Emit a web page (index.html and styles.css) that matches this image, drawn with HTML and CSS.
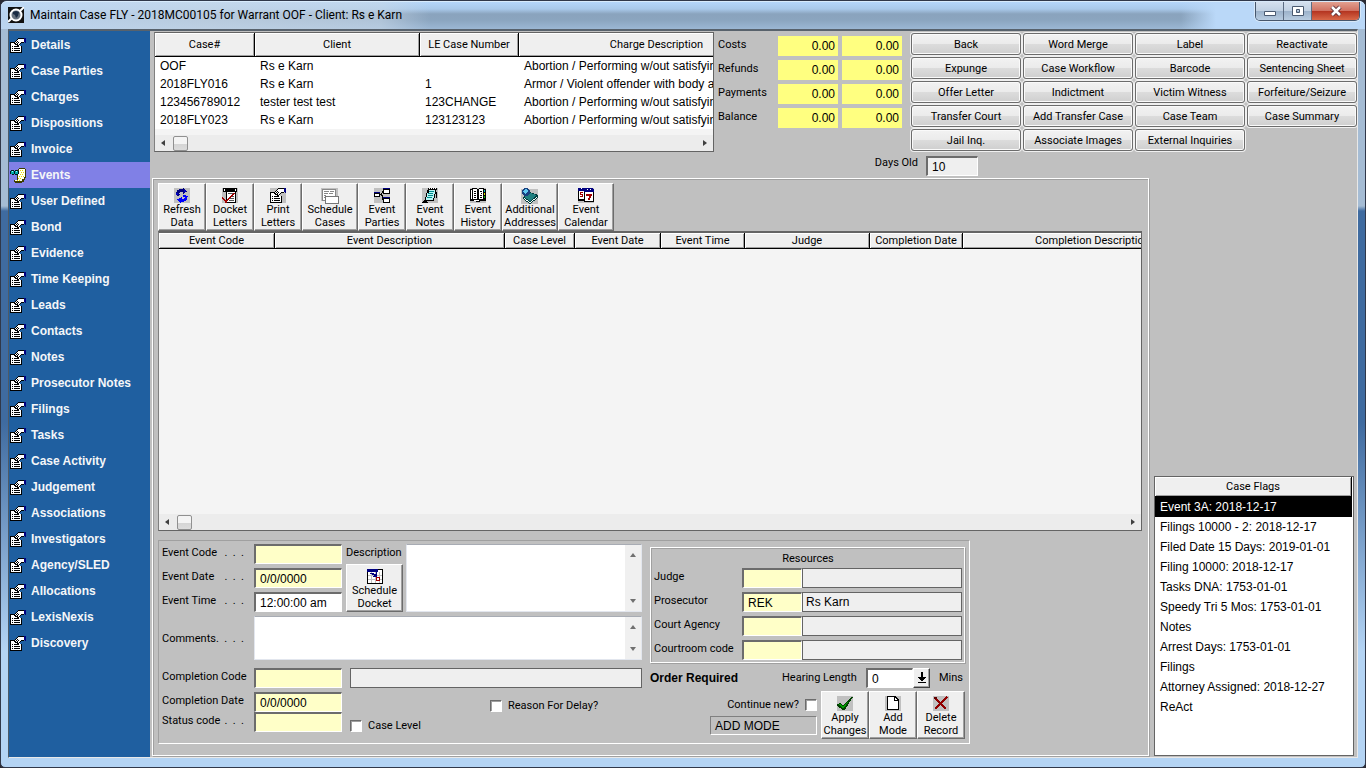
FILE: index.html
```html
<!DOCTYPE html>
<html lang="en">
<head>
<meta charset="utf-8">
<title>Maintain Case FLY - 2018MC00105 for Warrant OOF - Client: Rs e Karn</title>
<link rel="stylesheet" href="styles.css">
</head>
<body>
<svg class="defs" width="0" height="0" aria-hidden="true">
  <symbol id="i-props" viewBox="0 0 16 15">
    <path d="M0 4h6v1H1v9h10V8h1v7H0z" fill="#000"/>
    <path d="M1 5h9v3h1v6H1z" fill="#fff"/>
    <path d="M2 8h1v1H2zM4 8h5v1H4zM2 10h1v1H2zM4 10h6v1H4zM2 12h1v1H2zM4 12h6v1H4z" fill="#000"/>
    <path d="M5 3h1V2h1V1h1V0h6v5h-3v1h-1v1H9v1H7V7H5V6H4V4h1z" fill="#000"/>
    <path d="M6 3h1V2h1V1h6v3h-3v1h-1v1H9v1H8V6H6V5H5V4h1z" fill="#fff"/>
    <path d="M6 4h1v1H6zM8 4h1v1H8zM7 3h1v1H7zM7 5h1v1H7z" fill="#000"/>
    <path d="M14 0h2v5h-1V4h-1z" fill="#000080"/>
  </symbol>
  <symbol id="i-glasses" viewBox="0 0 16 15">
    <path d="M8 1h1V0h6v1h1v9h-1v2h-1v2h-2v1H5v-1H4v-2h3V6h1z" fill="#3c3c00"/>
    <path d="M9 1h6v8h-1v2h-2v2H5v-1h3V6h1z" fill="#fffff0"/>
    <path d="M10 2h1v1h-1zM12 2h1v1h-1zM11 4h1v1h-1zM13 4h1v1h-1zM10 6h1v1h-1zM12 6h1v1h-1zM9 8h1v1H9zM11 8h1v1h-1zM13 8h1v1h-1zM8 10h1v1H8zM10 10h1v1h-1zM7 12h1v1H7zM9 12h1v1H9z" fill="#e8d800"/>
    <path d="M0 3h1V2h3v1h1V2h3v1h1v3H8v1H5V6H4v1H2V6H0z" fill="#001818"/>
    <path d="M1 3h3v3H1zM5 3h3v3H5z" fill="#00a8a8"/>
    <path d="M2 3h1v1H2zM6 3h1v1H6z" fill="#a0ffff"/>
  </symbol>
  <symbol id="i-refresh" viewBox="0 0 16 15">
    <path fill="#c0c0c0" d="M0 0h16v15H0z"/>
    <path d="M2 6V4h1V2h2V1h4V0h1v1h1v1h1v1h1v1h-2v1h-1v1H9V4H6v1H5v1h1v1H5v1H3V7H2z" fill="#000080"/>
    <path d="M9 7h3v1h2v1h-1v3h-1v1h-2v1H7v1H6v-1H5v-1H4v-1H3v-1h2v-1h2V9h1v2h2v-1h1V9H9z" fill="#0000ff"/>
    <path d="M2 5h2v2H2zM10 2h2v2h-2z" fill="#0000c0"/>
  </symbol>
  <symbol id="i-docket" viewBox="0 0 16 15">
    <path d="M1 0h14v4h-1v11H4V4H1z" fill="#000"/>
    <path d="M2 1h1v2H2zM13 1h1v2h-1zM5 4h8v10H5z" fill="#fff"/>
    <path d="M6 5h6v1H6zM9 8h3v1H9zM8 10h4v1H8zM7 12h5v1H7z" fill="#505050"/>
    <path d="M0 9l4 5 8-9" fill="none" stroke="#a00000" stroke-width="1.500"/>
  </symbol>
  <symbol id="i-pages" viewBox="0 0 18 16">
    <path d="M0 0h17v13H0z" fill="#c0c0c0"/>
    <path d="M1 1h13v11H1z" fill="#fff" stroke="#888"/>
    <path d="M3 3h5v1H3zM9 3h4v1H9zM3 5h4v1H3zM8 5h4v1H8zM3 7h2v1H3zM3 9h1v1H3z" fill="#888"/>
    <path d="M4.500 8.500h13v7h-13z" fill="#fff" stroke="#777"/>
  </symbol>
  <symbol id="i-tree" viewBox="0 0 16 15">
    <path d="M0 4h6v5H0zM9 0h7v6H9zM9 9h7v6H9z" fill="#000"/>
    <path d="M1 6h4v2H1zM10 2h5v3h-5zM10 11h5v3h-5z" fill="#fff"/>
    <path d="M0 4h6v1H0zM9 0h7v1H9zM9 9h7v1H9z" fill="#000080"/>
    <path d="M6 6h1V5h1V3h1v2H8v2h1v5H8V8H7V7H6z" fill="#000"/>
  </symbol>
  <symbol id="i-notes" viewBox="0 0 16 15">
    <path d="M6 0h9v2h-1v4h-1v4h-1v3H3v-4h1V5h1V2h1z" fill="#000"/>
    <path d="M7 2h6v4h-1v4h-1v2H4V9h1V5h2z" fill="#b8f4f4"/>
    <path d="M7 3h5v1H7zM6 5h5v1H6zM6 7h5v1H6zM5 9h5v1H5z" fill="#008c8c"/>
    <path d="M7 0h1v1H7zM9 0h1v1H9zM11 0h1v1h-1zM13 0h1v1h-1z" fill="#fff"/>
    <path d="M0 15v-1h1v-1h1v-1h2v1h1v1h1v1zM14 4h1v6h-1z" fill="#000"/>
  </symbol>
  <symbol id="i-book" viewBox="0 0 16 15">
    <path d="M0 1h2V0h5v1h2V0h5v1h2v12h-6v1H6v-1H0z" fill="#000"/>
    <path d="M1 2h1v9H1zM3 1h4v10H3zM9 1h4v10H9zM1 12h8v1H6z" fill="#fff"/>
    <path d="M4 3h2v1H4zM4 5h2v1H4zM4 7h2v1H4zM10 3h2v1h-2zM11 5h1v1h-1zM10 7h2v1h-2zM4 9h2v1H4zM10 9h2v1h-2z" fill="#000"/>
    <path d="M14 2h1v2h-1z" fill="#00c0c0"/><path d="M14 5h1v2h-1z" fill="#e0e000"/><path d="M14 8h1v2h-1z" fill="#00c000"/>
  </symbol>
  <symbol id="i-address" viewBox="0 0 18 16">
    <path d="M0 1h17v15H0z" fill="#c0c0c0"/>
    <path d="M2 9l7-5 8 3v3l-8 6-7-5z" fill="#003c3c"/>
    <path d="M3 9l6-4 7 2-7 6z" fill="#208080"/>
    <path d="M9 14l7-5v1l-7 5-6-4v-1z" fill="#fff"/>
    <circle cx="5" cy="4" r="4" fill="#184080"/>
    <path d="M2 3l3-2 2 2-2 3-2-1z" fill="#60c8f0"/>
  </symbol>
  <symbol id="i-calendar" viewBox="0 0 16 15">
    <path d="M0 0h10v13H0z" fill="#000"/><path d="M1 3h8v8H1z" fill="#fff"/><path d="M0 0h15v3H0z" fill="#000080"/>
    <path d="M2 4h3v1H3v1h2v3H2V8h2V7H2z" fill="#a00000"/>
    <path d="M6 2h10v12H6z" fill="#000"/><path d="M7 4h8v9H7z" fill="#fff"/><path d="M6 1h10v3H6z" fill="#000080"/>
    <path d="M8 6h6v2h-1v2h-1v2h-2v-2h1V8H8z" fill="#a00000"/>
    <path d="M3 0h1v1H3zM9 1h1v1H9zM12 1h1v1h-1z" fill="#fff"/>
  </symbol>
  <symbol id="i-grid" viewBox="0 0 16 15">
    <path d="M0 0h16v15H0z" fill="#000"/><path d="M1 3h14v11H1z" fill="#fff"/><path d="M11 1h4v2h-4z" fill="#fff"/>
    <path d="M4 3h1v11H4zM8 3h1v11H8zM12 3h1v11h-1zM1 6h14v1H1zM1 10h14v1H1z" fill="#c0c0c0"/>
    <path d="M0 0h11v3H0zM3 4h4v1h2V3h1v5H6V7h1V6H5V5H3z" fill="#000080"/>
    <path d="M9.500 8.500h3v3h-3z" fill="#fff" stroke="#a00000"/>
  </symbol>
  <symbol id="i-check" viewBox="0 0 16 15">
    <path d="M0 0h16v15H0z" fill="#c0c0c0"/>
    <path d="M0 8l3-1 3 3 8-9h2l-7 11-2 2H6L0 10z" fill="#004000"/>
    <path d="M1 8h2l3 3 8-9-8 11z" fill="#00a000"/>
  </symbol>
  <symbol id="i-page" viewBox="0 0 16 15">
    <path d="M0 0h16v15H0z" fill="#c0c0c0"/>
    <path d="M2 0h8l4 4v10H2z" fill="#000"/><path d="M3 1h6v4h4v8H3z" fill="#fff"/>
    <path d="M10 2l2 2h-2z" fill="#fff"/>
  </symbol>
  <symbol id="i-delete" viewBox="0 0 16 15">
    <path d="M0 0h16v15H0z" fill="#c0c0c0"/>
    <path d="M2 2l11 11M14 1L2 13" stroke="#900000" stroke-width="2" fill="none"/>
    <path d="M1 1h3v2H1z" fill="#600000"/>
  </symbol>
</svg>
<div class="window">
  <header class="titlebar">
    <svg class="app-logo" viewBox="0 0 16 16" width="16" height="16" aria-hidden="true">
      <path d="M0 0h16v16H0z" fill="#101010"/>
      <circle cx="8" cy="8" r="5.500" fill="#66717e" stroke="#fff" stroke-width="2"/>
      <path d="M5 5l3-1 3 1-1 4-2 2-1-3-2-1z" fill="#1a2c44"/>
      <path d="M0 15l4-4M12 4l4-4" stroke="#fff" stroke-width="2"/>
    </svg>
    <h1 class="title">Maintain Case FLY - 2018MC00105 for Warrant OOF - Client: Rs e Karn</h1>
    <div class="winctl">
      <button type="button" class="wbtn min" aria-label="Minimize"><svg viewBox="0 0 14 12" width="14" height="12"><path d="M1.500 6.500h11v4h-11z" fill="#fff" stroke="#4a5a70"/></svg></button>
      <button type="button" class="wbtn max" aria-label="Maximize"><svg viewBox="0 0 14 12" width="14" height="12"><path d="M1.500 1.500h11v9h-11zM5.500 4.500v3h3v-3z" fill="#fff" stroke="#4a5a70" fill-rule="evenodd"/></svg></button>
      <button type="button" class="wbtn close" aria-label="Close"><svg viewBox="0 0 14 12" width="14" height="12"><path d="M3 2l8 8M11 2l-8 8" stroke="#5a3038" stroke-width="4.500"/><path d="M3 2l8 8M11 2l-8 8" stroke="#fff" stroke-width="2.500"/></svg></button>
    </div>
  </header>
  <div class="client">
    <nav class="sidebar">
      <a href="#"><svg><use href="#i-props"/></svg>Details</a>
      <a href="#"><svg><use href="#i-props"/></svg>Case Parties</a>
      <a href="#"><svg><use href="#i-props"/></svg>Charges</a>
      <a href="#"><svg><use href="#i-props"/></svg>Dispositions</a>
      <a href="#"><svg><use href="#i-props"/></svg>Invoice</a>
      <a href="#" class="active" aria-current="page"><svg><use href="#i-glasses"/></svg>Events</a>
      <a href="#"><svg><use href="#i-props"/></svg>User Defined</a>
      <a href="#"><svg><use href="#i-props"/></svg>Bond</a>
      <a href="#"><svg><use href="#i-props"/></svg>Evidence</a>
      <a href="#"><svg><use href="#i-props"/></svg>Time Keeping</a>
      <a href="#"><svg><use href="#i-props"/></svg>Leads</a>
      <a href="#"><svg><use href="#i-props"/></svg>Contacts</a>
      <a href="#"><svg><use href="#i-props"/></svg>Notes</a>
      <a href="#"><svg><use href="#i-props"/></svg>Prosecutor Notes</a>
      <a href="#"><svg><use href="#i-props"/></svg>Filings</a>
      <a href="#"><svg><use href="#i-props"/></svg>Tasks</a>
      <a href="#"><svg><use href="#i-props"/></svg>Case Activity</a>
      <a href="#"><svg><use href="#i-props"/></svg>Judgement</a>
      <a href="#"><svg><use href="#i-props"/></svg>Associations</a>
      <a href="#"><svg><use href="#i-props"/></svg>Investigators</a>
      <a href="#"><svg><use href="#i-props"/></svg>Agency/SLED</a>
      <a href="#"><svg><use href="#i-props"/></svg>Allocations</a>
      <a href="#"><svg><use href="#i-props"/></svg>LexisNexis</a>
      <a href="#"><svg><use href="#i-props"/></svg>Discovery</a>
    </nav>
    <main class="main">
      <section class="top">
        <div class="grid cases">
          <div class="grid-view">
            <table>
              <colgroup><col class="c100"><col class="c165"><col class="c99"><col class="c276"></colgroup>
              <thead><tr><th>Case#</th><th>Client</th><th>LE Case Number</th><th>Charge Description</th></tr></thead>
              <tbody>
                <tr><td>OOF</td><td>Rs e Karn</td><td></td><td>Abortion / Performing w/out satisfying</td></tr>
                <tr><td>2018FLY016</td><td>Rs e Karn</td><td>1</td><td>Armor / Violent offender with body armor</td></tr>
                <tr><td>123456789012</td><td>tester test test</td><td>123CHANGE</td><td>Abortion / Performing w/out satisfying</td></tr>
                <tr><td>2018FLY023</td><td>Rs e Karn</td><td>123123123</td><td>Abortion / Performing w/out satisfying</td></tr>
              </tbody>
            </table>
          </div>
          <div class="hscroll"><i class="arr left"></i><i class="thumb"></i><i class="arr right"></i></div>
        </div>
        <div class="summary">
          <div class="totals">
            <span>Costs</span><output>0.00</output><output>0.00</output>
            <span>Refunds</span><output>0.00</output><output>0.00</output>
            <span>Payments</span><output>0.00</output><output>0.00</output>
            <span>Balance</span><output>0.00</output><output>0.00</output>
          </div>
          <div class="days"><label for="days">Days Old</label><input id="days" class="sunk gray" value="10" readonly></div>
        </div>
        <div class="actions">
          <button type="button">Back</button><button type="button">Word Merge</button><button type="button">Label</button><button type="button">Reactivate</button>
          <button type="button">Expunge</button><button type="button">Case Workflow</button><button type="button">Barcode</button><button type="button">Sentencing Sheet</button>
          <button type="button">Offer Letter</button><button type="button">Indictment</button><button type="button">Victim Witness</button><button type="button">Forfeiture/Seizure</button>
          <button type="button">Transfer Court</button><button type="button">Add Transfer Case</button><button type="button">Case Team</button><button type="button">Case Summary</button>
          <button type="button">Jail Inq.</button><button type="button">Associate Images</button><button type="button">External Inquiries</button>
        </div>
      </section>
      <div class="lower">
        <section class="panel">
          <div class="toolbar">
            <button type="button" class="tool"><svg><use href="#i-refresh"/></svg>Refresh<br>Data</button>
            <button type="button" class="tool"><svg><use href="#i-docket"/></svg>Docket<br>Letters</button>
            <button type="button" class="tool"><svg><use href="#i-props"/></svg>Print<br>Letters</button>
            <button type="button" class="tool wide"><svg class="big"><use href="#i-pages"/></svg>Schedule<br>Cases</button>
            <button type="button" class="tool"><svg><use href="#i-tree"/></svg>Event<br>Parties</button>
            <button type="button" class="tool"><svg><use href="#i-notes"/></svg>Event<br>Notes</button>
            <button type="button" class="tool"><svg><use href="#i-book"/></svg>Event<br>History</button>
            <button type="button" class="tool wide"><svg class="big"><use href="#i-address"/></svg>Additional<br>Addresses</button>
            <button type="button" class="tool wide"><svg><use href="#i-calendar"/></svg>Event<br>Calendar</button>
          </div>
          <div class="grid events">
            <div class="grid-view">
              <table>
                <colgroup><col class="c116"><col class="c230"><col class="c70"><col class="c86"><col class="c84"><col class="c125"><col class="c93"><col class="c260"></colgroup>
                <thead><tr><th>Event Code</th><th>Event Description</th><th>Case Level</th><th>Event Date</th><th>Event Time</th><th>Judge</th><th>Completion Date</th><th>Completion Description</th></tr></thead>
              </table>
            </div>
            <div class="hscroll"><i class="arr left"></i><i class="thumb"></i><i class="arr right"></i></div>
          </div>
          <form class="form">
            <div class="col-a">
              <div class="fields">
                <label for="ecode" class="dots"><span>Event Code</span><span>.&nbsp; .&nbsp; .</span></label><input id="ecode" class="sunk yellow">
                <label for="desc" class="lab">Description</label>
                <div class="area desc"><textarea id="desc"></textarea><div class="vscroll"><i class="arr up"></i><i class="arr down"></i></div></div>
                <label for="edate" class="dots"><span>Event Date</span><span>.&nbsp; .&nbsp; .</span></label><input id="edate" class="sunk yellow" value="0/0/0000">
                <button type="button" class="tool sched"><svg><use href="#i-grid"/></svg>Schedule<br>Docket</button>
                <label for="etime" class="dots"><span>Event Time</span><span>.&nbsp; .&nbsp; .</span></label><input id="etime" class="sunk" value="12:00:00 am">
              </div>
              <div class="comments">
                <label for="comm" class="dots"><span>Comments</span><span>.&nbsp; .&nbsp; .&nbsp; .</span></label>
                <div class="area"><textarea id="comm"></textarea><div class="vscroll"><i class="arr up"></i><i class="arr down"></i></div></div>
              </div>
              <div class="completion">
                <div class="codes">
                  <label for="ccode">Completion Code</label><input id="ccode" class="sunk yellow">
                  <label for="cdate">Completion Date</label><input id="cdate" class="sunk yellow" value="0/0/0000">
                  <label for="scode" class="dots"><span>Status code</span><span>.&nbsp; .&nbsp; .</span></label><input id="scode" class="sunk yellow">
                </div>
                <div class="extra">
                  <input class="flat" aria-label="Completion description" readonly>
                  <label class="tick reason"><input type="checkbox">Reason For Delay?</label>
                  <label class="tick"><input type="checkbox">Case Level</label>
                </div>
              </div>
            </div>
            <div class="col-b">
              <fieldset class="resources">
                <div class="res-title">Resources</div>
                <label for="r1">Judge</label><input id="r1" class="sunk yellow"><input class="flat" aria-label="Judge name" readonly>
                <label for="r2">Prosecutor</label><input id="r2" class="sunk yellow" value="REK"><input class="flat" aria-label="Prosecutor name" value="Rs Karn" readonly>
                <label for="r3">Court Agency</label><input id="r3" class="sunk yellow"><input class="flat" aria-label="Court agency name" readonly>
                <label for="r4">Courtroom code</label><input id="r4" class="sunk yellow"><input class="flat" aria-label="Courtroom name" readonly>
              </fieldset>
              <div class="hearing">
                <strong>Order Required</strong>
                <label for="hl">Hearing Length</label>
                <input id="hl" class="sunk" value="0">
                <button type="button" class="drop" aria-label="Choose length"><svg viewBox="0 0 10 12" width="10" height="12"><path d="M4 0h2v5h3v1H8v1H7v1H6v1H4V8H3V7H2V6H1V5h3zM1 10h8v1H1z" fill="#000"/></svg></button>
                <span>Mins</span>
              </div>
              <div class="commit">
                <div class="mode">
                  <label class="tick">Continue new?<input type="checkbox"></label>
                  <output class="mode-box">ADD MODE</output>
                </div>
                <button type="button" class="tool"><svg><use href="#i-check"/></svg>Apply<br>Changes</button>
                <button type="button" class="tool"><svg><use href="#i-page"/></svg>Add<br>Mode</button>
                <button type="button" class="tool"><svg><use href="#i-delete"/></svg>Delete<br>Record</button>
              </div>
            </div>
          </form>
        </section>
        <aside class="flags">
          <table>
            <thead><tr><th>Case Flags</th></tr></thead>
            <tbody>
              <tr class="sel"><td>Event 3A: 2018-12-17</td></tr>
              <tr><td>Filings 10000 - 2: 2018-12-17</td></tr>
              <tr><td>Filed Date 15 Days: 2019-01-01</td></tr>
              <tr><td>Filing 10000: 2018-12-17</td></tr>
              <tr><td>Tasks DNA: 1753-01-01</td></tr>
              <tr><td>Speedy Tri 5 Mos: 1753-01-01</td></tr>
              <tr><td>Notes</td></tr>
              <tr><td>Arrest Days: 1753-01-01</td></tr>
              <tr><td>Filings</td></tr>
              <tr><td>Attorney Assigned: 2018-12-27</td></tr>
              <tr><td>ReAct</td></tr>
            </tbody>
          </table>
        </aside>
      </div>
    </main>
  </div>
</div>
</body>
</html>
```
FILE: styles.css
```css
* { box-sizing: border-box; }
body { margin: 0; background: #2a2a33; }
body, button, label { font: 11px/14px Roboto, "Liberation Sans", sans-serif; color: #000; }
input, textarea, td, output { font: 12px/16px "Liberation Sans", Arial, sans-serif; color: #000; }
.defs { display: block; position: absolute; }
svg { flex: none; }
svg use { shape-rendering: crispEdges; }

/* window frame */
.window {
  display: flex; flex-direction: column; min-height: 100vh;
  padding: 0 7px 9px; border: 1px solid #30384a; border-radius: 7px 7px 5px 5px;
  background: linear-gradient(#a5bcd4 0, #a5bcd4 205px, #3f6ba0 210px, #3f6ba0 55%, #b4d4f4 85%);
}
.titlebar {
  display: flex; align-items: flex-start; height: 28px; margin: 0 -7px; padding-left: 7px;
  border-top: 1px solid #d8ebfc; border-radius: 6px 6px 0 0;
  background:
    linear-gradient(90deg, rgba(190,216,244,.9) 0, rgba(200,216,232,.75) 200px, rgba(200,216,232,.6) 380px, transparent 430px, transparent 1180px, #bad8f8 1215px),
    linear-gradient(#b4d6fa 0, #a9c9ea 7px, #8aa3bd 12px, #8ba5bf 18px, #9db9d6 28px);
}
.app-logo { margin-top: 5px; }
.title { flex: 1; margin: 4px 0 0 6px; font: 12px/18px Roboto, sans-serif; }
.winctl { display: flex; margin-right: 5px; border: 1px solid #46566c; border-top: 0; border-radius: 0 0 5px 5px; overflow: hidden; box-shadow: 0 0 0 1px #d8e8f8; }
.wbtn { display: flex; align-items: center; justify-content: center; width: 28px; height: 18px; padding: 0; border: 0; border-right: 1px solid #5c6c82; background: linear-gradient(#d4e0ee 0, #c0d0e2 50%, #9cb2ca 51%, #b8cce0); }
.wbtn.close { width: 47px; border: 0; background: linear-gradient(#e2a090 0, #d07060 50%, #b43420 51%, #d86848); }

.client { flex: 1; display: flex; border: 1px solid #4c5a68; border-top: 2px solid #58626c; background: #c0c0c0; min-width: 0; }
.client { border-right-color: #e8e8e8; border-bottom-color: #e8e8e8; }

.sidebar { flex: none; width: 141px; padding-top: 1px; background: #1f5fa0; }
.sidebar a { display: flex; align-items: center; gap: 5px; height: 26px; padding-left: 1px; color: #f4f6f8; font: bold 12px/16px "Liberation Sans", Arial, sans-serif; text-decoration: none; }
.sidebar svg { width: 16px; height: 15px; }
.sidebar a.active { background: #8080e6; }

.main { flex: 1; min-width: 0; display: flex; flex-direction: column; }

/* grids */
.grid { display: flex; flex-direction: column; border: 1px solid #646464; border-left-color: #808080; min-width: 0; background: #f4f4f4; }
.grid-view { flex: 1; overflow: hidden; }
table { border-collapse: separate; border-spacing: 0; table-layout: fixed; }
th { padding: 1px 0 0; font: 11px/14px Roboto, sans-serif; text-align: center; background: #efefef; border-right: 1px solid #000; border-bottom: 1px solid #000; box-shadow: inset 1px 1px #fff, inset -1px -1px #a0a0a0; }
td { height: 18px; padding: 0 5px; white-space: nowrap; overflow: hidden; background: #fff; }
.cases table { width: 640px; }
.cases th { height: 24px; }
.events table { width: 1064px; }
.events th { height: 16px; }
.c100 { width: 100px; } .c165 { width: 165px; } .c99 { width: 99px; } .c276 { width: 276px; }
.c116 { width: 116px; } .c230 { width: 230px; } .c70 { width: 70px; } .c86 { width: 86px; }
.c84 { width: 84px; } .c125 { width: 125px; } .c93 { width: 93px; } .c260 { width: 260px; }
.hscroll { flex: none; display: flex; align-items: center; height: 16px; padding: 0 6px; background: #ececec; }
.thumb { width: 15px; height: 15px; margin-left: 8px; border: 1px solid #909090; border-radius: 2px; background: linear-gradient(#f4f4f4 50%, #d4d4d4 51%, #dcdcdc); }
.arr { width: 0; height: 0; border: 3px solid transparent; }
.arr.left { border-left: 0; border-right: 4px solid #404040; }
.arr.right { margin-left: auto; border-right: 0; border-left: 4px solid #404040; }
.arr.up { border-top: 0; border-bottom: 4px solid #707070; }
.arr.down { border-bottom: 0; border-top: 4px solid #707070; }

/* top strip */
.top { display: flex; height: 147px; padding-left: 4px; }
.cases { flex: 1; height: 120px; margin-top: 1px; }
.summary { flex: none; width: 196px; padding-left: 4px; }
.totals { display: grid; grid-template-columns: 56px 60px 60px; grid-auto-rows: 20px; gap: 4px; padding-top: 5px; }
.totals span { line-height: 18px; }
.totals output { padding: 2px 3px 0 0; text-align: right; background: #ffff80; }
.days { display: flex; justify-content: flex-end; gap: 8px; margin: 28px -68px 0 0; }
.days input { width: 52px; height: 20px; }
.actions { flex: none; align-self: flex-start; display: grid; grid-template-columns: repeat(4, 110px); grid-auto-rows: 22px; gap: 2px; margin-top: 2px; padding: 0 0 1px 1px; }
.actions button { padding: 1px 0 0; border: 1px solid #6c6c6c; border-radius: 3px; box-shadow: 0 0 0 1px #f0f0f0, inset 0 0 0 1px #fafafa; background: linear-gradient(#f2f2f2 0, #ebebeb 50%, #dcdcdc 51%, #cfcfcf); white-space: nowrap; }

/* lower area */
.lower { flex: 1; display: flex; gap: 5px; padding: 0 3px 1px 2px; }
.panel { flex: 1; min-width: 0; display: flex; flex-direction: column; padding: 4px 6px 11px 5px; border: 1px solid #fff; box-shadow: inset 1px 1px #a0a0a0, 1px 1px #a0a0a0; }
.toolbar { display: flex; }
.tool { display: flex; flex-direction: column; align-items: center; width: 48px; height: 48px; padding: 4px 0 0; border: 1px solid #6c6c6c; border-top-color: #fff; border-left-color: #fff; background: #efefef; box-shadow: inset -1px -1px #a0a0a0; font-size: 11px; line-height: 13px; text-align: center; white-space: nowrap; }
.tool.wide { width: 56px; }
.tool svg { width: 16px; height: 15px; background: #c0c0c0; }
.tool svg.big { width: 18px; height: 16px; margin-bottom: -1px; background: none; }
.events { flex: 1; min-height: 299px; border-top-width: 2px; }

.form { display: flex; align-items: flex-start; width: 812px; height: 204px; margin-top: 9px; padding: 3px 4px; border: 1px solid #fff; border-top-color: #a0a0a0; border-left-color: #a0a0a0; }
.col-a { flex: none; width: 480px; margin-right: 7px; }
.fields { display: grid; grid-template-columns: 92px 92px 60px 236px; grid-auto-rows: 24px; margin-left: -1px; }
.fields .desc { grid-column: 4; grid-row: 1 / 4; height: 68px; }
.fields .lab { grid-column: 3; padding-top: 2px; }
.fields .sched { grid-column: 3; grid-row: 2 / 4; width: 57px; margin-top: -4px; }
.fields label:not(.lab) { grid-column: 1; padding-top: 2px; }
.dots { display: flex; justify-content: space-between; padding-right: 10px; }
.sunk { width: 88px; height: 20px; padding: 1px 0 0 4px; border: 1px solid #fff; border-top: 2px solid #6c6c6c; border-left: 2px solid #6c6c6c; border-radius: 0; background: #fff; outline: 0; }
.yellow { background: #ffffc8; }
.gray { background: #efefef; }
.flat { height: 20px; padding: 0 3px; border: 1px solid #646464; border-radius: 0; background: #efefef; outline: 0; }
.area { display: flex; border: 1px solid #e2e6ee; border-top-color: #a8acb4; background: #fff; }
.area textarea { flex: 1; min-width: 0; border: 0; resize: none; outline: 0; background: #fff; }
.vscroll { display: flex; flex-direction: column; justify-content: space-between; align-items: center; width: 16px; padding: 8px 0; background: #f0f0f0; }
.comments { display: flex; margin-left: -1px; height: 44px; }
.comments label { width: 92px; padding-top: 16px; }
.comments .area { flex: 1; margin-right: 1px; }
.completion { display: flex; margin: 8px 0 0 -1px; }
.codes { display: grid; grid-template-columns: 92px 88px; grid-template-rows: 24px 20px 20px; align-items: start; }
.codes label { padding-top: 2px; }
.extra { flex: 1; display: flex; flex-direction: column; align-items: flex-start; padding: 0 1px 0 8px; }
.extra .flat { width: 100%; }
.tick { display: flex; align-items: center; gap: 6px; height: 14px; }
.tick input { appearance: none; width: 12px; height: 12px; margin: 0; border: 1px solid #fff; border-top-color: #6c6c6c; border-left-color: #6c6c6c; background: #fff; box-shadow: inset 1px 1px #a0a0a0; }
.extra .tick { margin-top: 6px; }
.extra .reason { margin: 11px 0 0 140px; }

.col-b { flex: none; width: 315px; }
.resources { display: grid; grid-template-columns: 88px 60px 160px; grid-template-rows: 14px; grid-auto-rows: 20px; row-gap: 4px; min-width: 0; margin: 3px 0 0; padding: 2px 3px; border: 1px solid #fff; box-shadow: inset 1px 1px #a0a0a0, 1px 1px #a0a0a0; }
.resources .res-title { grid-column: 1 / 4; text-align: center; line-height: 18px; }
.resources label { padding-top: 2px; }
.resources .sunk { width: 60px; }
.resources .flat { width: 160px; }
.hearing { display: flex; align-items: center; height: 20px; margin-top: 5px; }
.hearing strong { width: 132px; font: bold 12px/16px "Liberation Sans", Arial, sans-serif; }
.hearing label { width: 84px; }
.hearing .sunk { width: 47px; }
.drop { display: flex; align-items: center; justify-content: center; width: 17px; height: 20px; padding: 0; border: 1px solid #404040; border-top-color: #fff; border-left-color: #fff; background: #efefef; box-shadow: inset -1px -1px #a0a0a0; }
.hearing span { margin-left: 9px; }
.commit { display: flex; margin-top: 3px; }
.mode { width: 171px; padding: 7px 4px 0 60px; }
.mode .tick { justify-content: flex-end; }
.mode-box { display: block; height: 19px; margin-top: 4px; padding: 1px 4px; border: 1px solid #808080; border-bottom-color: #fff; border-right-color: #fff; }

.flags { flex: none; width: 200px; height: 280px; align-self: flex-end; border: 1px solid #646464; background: #fff; }
.flags table { width: 197px; }
.flags th { height: 20px; }
.flags td { height: 20px; }
.flags .sel td { background: #000; color: #fff; }
```
